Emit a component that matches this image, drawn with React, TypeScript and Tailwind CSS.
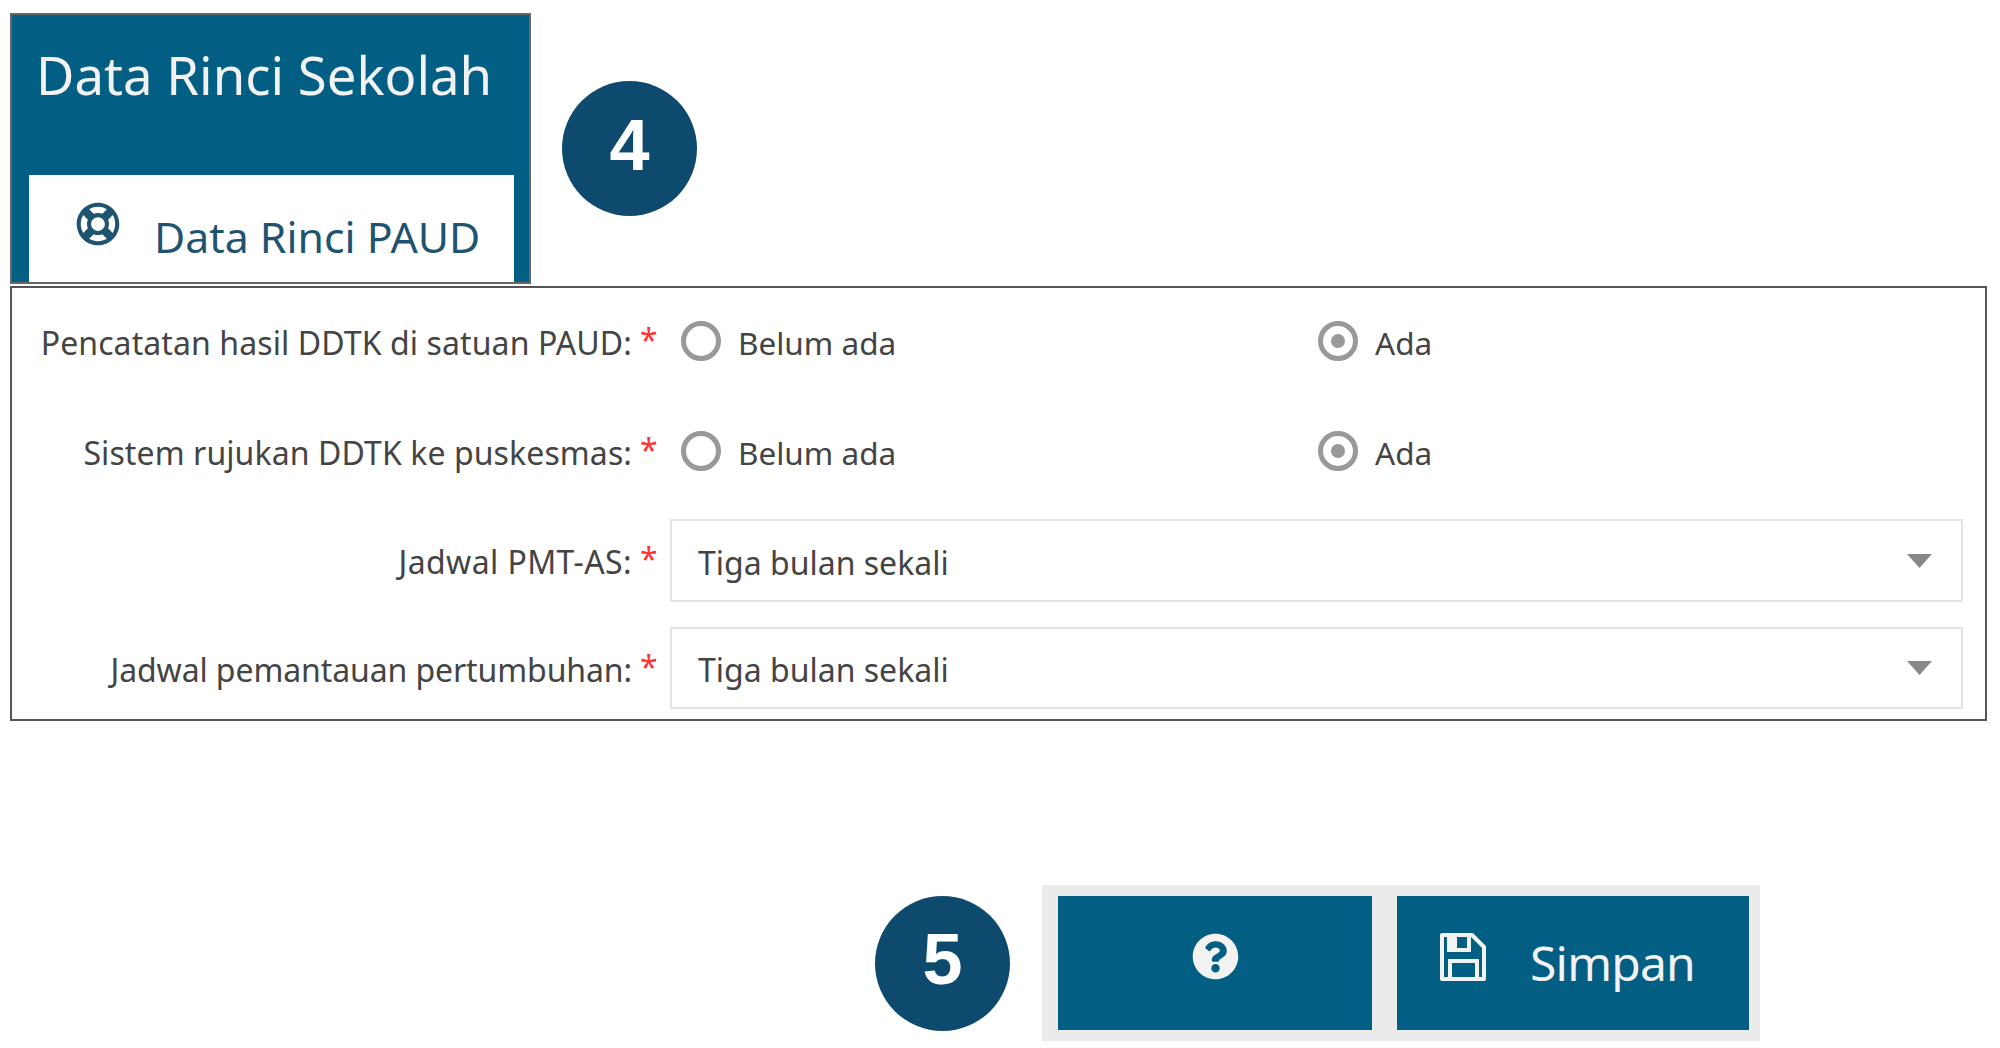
import React from "react";
import { FaRegLifeRing, FaQuestionCircle } from "react-icons/fa";

const Label = ({ text, className }: { text: string; className?: string }) => (
  <div className="flex w-[646px] justify-end text-[32px] leading-none text-[#444]">
    <span className={"pt-[3px] " + (className ?? "")}>{text}</span>
    <span className="ml-[8px] w-[18px] text-[#f33]">*</span>
  </div>
);

const Radio = ({ label, checked }: { label: string; checked?: boolean }) => (
  <div className="flex w-[637px] items-center">
    <div className="flex h-[40px] w-[40px] items-center justify-center rounded-full border-[5px] border-[#999]">
      {checked && <div className="h-[14px] w-[14px] rounded-full bg-[#999]" />}
    </div>
    <span className="ml-[17px] pt-[3px] text-[31.5px] leading-none text-[#444]">{label}</span>
  </div>
);

const Select = ({ value }: { value: string }) => (
  <div className="flex h-full w-[1293px] items-center justify-between border-2 border-[#e4e4e4] pl-[26px] pr-[29px]">
    <span className="pt-[4px] text-[32px] leading-none text-[#444]">{value}</span>
    <svg width="25" height="14" viewBox="0 0 25 14">
      <path d="M0 0H25L12.5 14Z" fill="#888" />
    </svg>
  </div>
);

const Badge = ({ n }: { n: string }) => (
  <div className="flex h-[135px] w-[135px] shrink-0 items-center justify-center rounded-full bg-[#0e4a6e] pb-[8px] font-['Liberation_Sans',sans-serif] text-[72px] font-bold leading-none text-white">
    {n}
  </div>
);

const SaveIcon = () => (
  <svg width="46" height="48" viewBox="0 0 46 48" className="mt-[37px] shrink-0" fill="none" stroke="#f2f2f2" strokeWidth="4">
    <path d="M2 2H32L44 14V46H2Z" strokeLinejoin="round" />
    <path d="M9 2V17H29V2" />
    <path d="M9 4H17V15H9Z" fill="#f2f2f2" stroke="none" />
    <path d="M10 46V28H37V46" />
  </svg>
);

export default function App() {
  return (
    <div className="h-[1048px] w-[2000px] overflow-hidden bg-white pt-[13px] font-['Noto_Sans',sans-serif]">
      <div className="ml-[10px] flex items-start">
        <div className="flex h-[271px] w-[521px] flex-col border-2 border-[#666] bg-[#025e82] pl-[17px]">
          <div className="h-[160px] shrink-0 pl-[7px] pt-[34px] text-[52.7px] leading-none text-[#f2f2f2]">Data Rinci Sekolah</div>
          <div className="flex w-[485px] flex-1 bg-white pl-[47px] text-[#1f5470]">
            <FaRegLifeRing className="mt-[27px] text-[44px]" />
            <span className="ml-[34px] mt-[41px] text-[42.8px] leading-none">Data Rinci PAUD</span>
          </div>
        </div>
        <div className="ml-[31px] mt-[68px]">
          <Badge n="4" />
        </div>
      </div>

      <div className="ml-[10px] mt-[2px] flex h-[435px] w-[1977px] flex-col border-2 border-[#555] pt-[33px]">
        <div className="flex h-[40px] items-center">
          <Label text="Pencatatan hasil DDTK di satuan PAUD:" className="tracking-[0.1px]" />
          <div className="ml-[23px] flex">
            <Radio label="Belum ada" />
            <Radio label="Ada" checked />
          </div>
        </div>
        <div className="mt-[70px] flex h-[40px] items-center">
          <Label text="Sistem rujukan DDTK ke puskesmas:" className="tracking-[0.1px]" />
          <div className="ml-[23px] flex">
            <Radio label="Belum ada" />
            <Radio label="Ada" checked />
          </div>
        </div>
        <div className="mt-[48px] flex h-[83px] items-center">
          <Label text="Jadwal PMT-AS:" className="tracking-[0.4px]" />
          <div className="ml-[12px] h-full">
            <Select value="Tiga bulan sekali" />
          </div>
        </div>
        <div className="mt-[25px] flex h-[82px] items-center">
          <Label text="Jadwal pemantauan pertumbuhan:" className="tracking-[-0.1px]" />
          <div className="ml-[12px] h-full">
            <Select value="Tiga bulan sekali" />
          </div>
        </div>
      </div>

      <div className="ml-[875px] mt-[164px] flex items-center">
        <Badge n="5" />
        <div className="ml-[32px] flex h-[156px] w-[718px] items-center gap-[25px] bg-[#ebebeb] pl-[16px]">
          <div className="flex h-[134px] w-[314px] items-center justify-center bg-[#025e82] pb-[14px] text-[#f2f2f2]">
            <FaQuestionCircle className="text-[47px]" />
          </div>
          <div className="flex h-[134px] w-[352px] items-start bg-[#025e82] pl-[43px] text-[#f2f2f2]">
            <SaveIcon />
            <span className="ml-[44px] mt-[43px] text-[48px] leading-none tracking-[-0.8px]">Simpan</span>
          </div>
        </div>
      </div>
    </div>
  );
}
